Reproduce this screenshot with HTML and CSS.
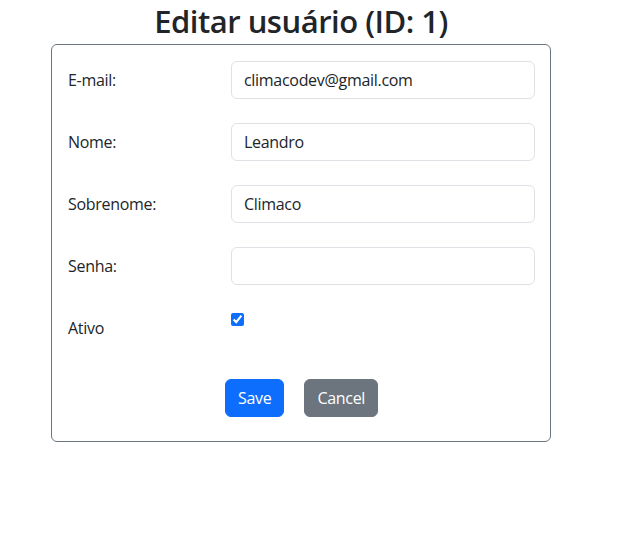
FILE: index.html
```html
<!DOCTYPE html>
<html lang="pt-BR">
<head>
<meta charset="utf-8">
<title>Editar usuário</title>
<link rel="stylesheet" href="styles.css">
</head>
<body>
<div class="page">
  <h1 class="title">Editar usuário (ID: 1)</h1>
  <form class="card">
    <div class="row">
      <label class="label" for="email">E-mail:</label>
      <input class="control" id="email" type="text" value="climacodev@gmail.com">
    </div>
    <div class="row">
      <label class="label" for="nome">Nome:</label>
      <input class="control" id="nome" type="text" value="Leandro">
    </div>
    <div class="row">
      <label class="label" for="sobrenome">Sobrenome:</label>
      <input class="control" id="sobrenome" type="text" value="Climaco">
    </div>
    <div class="row">
      <label class="label" for="senha">Senha:</label>
      <input class="control" id="senha" type="password" value="">
    </div>
    <div class="row">
      <label class="label" for="ativo">Ativo</label>
      <div class="check-cell"><input class="check" id="ativo" type="checkbox" checked></div>
    </div>
    <div class="actions">
      <button type="button" class="btn btn-primary">Save</button>
      <button type="button" class="btn btn-secondary">Cancel</button>
    </div>
  </form>
</div>
</body>
</html>
```
FILE: styles.css
```css
* { box-sizing: border-box; }
html, body { margin: 0; padding: 0; background: #fff; }
body {
  font-family: "Open Sans", "Noto Sans", sans-serif;
  font-size: 16px;
  line-height: 1.5;
  color: #212529;
  letter-spacing: -0.3px;
}
.page {
  width: 602px;
}
.title {
  margin: 0 0 2px;
  font-size: 31px;
  font-weight: 600;
  line-height: 42px;
  letter-spacing: -0.5px;
  text-align: center;
  color: #212529;
}
.card {
  width: 500px;
  margin: 0 auto;
  border: 1px solid #6c757d;
  border-radius: 6px;
  padding: 16px 15px 16px 16px;
}
.row {
  display: flex;
  align-items: flex-start;
  margin-bottom: 24px;
}
.label {
  width: 163px;
  flex: none;
  padding: 7px 0;
  line-height: 24px;
}
.control {
  flex: 1;
  min-width: 0;
  height: 38px;
  padding: 6px 12px;
  font: inherit;
  letter-spacing: inherit;
  color: #212529;
  border: 1px solid #dee2e6;
  border-radius: 6px;
  background: #fff;
  outline: none;
}
.check-cell {
  flex: 1;
  padding-top: 4px;
  line-height: 24px;
}
.check {
  width: 13px;
  height: 13px;
  margin: 0;
  accent-color: #0d6efd;
  vertical-align: top;
}
.actions {
  display: flex;
  justify-content: center;
  gap: 20px;
  margin-top: 32px;
  margin-bottom: 8px;
}
.btn {
  height: 38px;
  padding: 6px 12px;
  font: inherit;
  letter-spacing: inherit;
  line-height: 24px;
  color: #fff;
  border: 1px solid transparent;
  border-radius: 6px;
}
.btn-primary { background: #0d6efd; border-color: #0d6efd; }
.btn-secondary { background: #6c757d; border-color: #6c757d; }
```
